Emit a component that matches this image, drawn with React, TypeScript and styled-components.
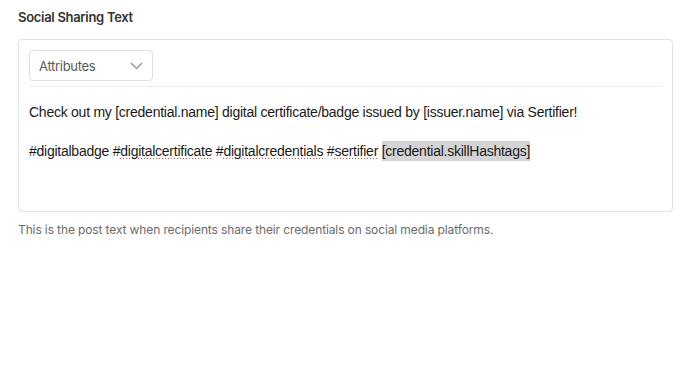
import styled, { createGlobalStyle } from 'styled-components'

const GlobalStyle = createGlobalStyle`
  body {
    margin: 0;
    background: #ffffff;
    font-family: Inter, 'Noto Sans', sans-serif;
  }
`

const Page = styled.div`
  width: 688px;
  height: 376px;
  padding: 8px 15px 0 18px;
  box-sizing: border-box;
  display: flex;
  flex-direction: column;
`

const Title = styled.div`
  font-size: 13px;
  font-weight: 600;
  letter-spacing: -0.3px;
  color: #333;
  line-height: 18px;
  margin-bottom: 13px;
`

const EditorBox = styled.div`
  border: 1px solid #e1e1e6;
  border-radius: 4px;
  height: 173px;
  box-sizing: border-box;
  padding: 10px 10px 0 10px;
  display: flex;
  flex-direction: column;
`

const Toolbar = styled.div`
  display: flex;
  padding-bottom: 5px;
  border-bottom: 1px solid #ececf0;
`

const Select = styled.div`
  width: 124px;
  height: 31px;
  box-sizing: border-box;
  border: 1px solid #dedee3;
  border-radius: 4px;
  display: flex;
  align-items: center;
  justify-content: space-between;
  padding: 0 9px 0 9px;
  font-size: 13px;
  letter-spacing: -0.3px;
  color: #5a5a5a;
`

const Content = styled.div`
  font-family: 'Liberation Sans', Arial, sans-serif;
  font-size: 14px;
  letter-spacing: -0.25px;
  color: #1a1a1a;
  padding-top: 16px;
`

const Line = styled.p`
  margin: 0 0 20px 0;
  line-height: 19px;
`

const Misspelled = styled.span`
  background-image: linear-gradient(to right, #e8453c 50%, transparent 50%);
  background-size: 3px 1px;
  background-position: 0 100%;
  background-repeat: repeat-x;
`

const Highlight = styled.span`
  background: #d4d4d4;
  padding: 2px 0;
`

const Helper = styled.div`
  margin-top: 9px;
  font-size: 12px;
  letter-spacing: -0.12px;
  color: #6b6b6b;
  line-height: 17px;
`

const Chevron = () => (
  <svg width="13" height="8" viewBox="0 0 13 8" fill="none">
    <path d="M1 1l5.5 5.5L12 1" stroke="#8a8a8a" strokeWidth="1.2" />
  </svg>
)

export default function App() {
  return (
    <>
      <GlobalStyle />
      <Page>
        <Title>Social Sharing Text</Title>
        <EditorBox>
          <Toolbar>
            <Select>
              <span>Attributes</span>
              <Chevron />
            </Select>
          </Toolbar>
          <Content>
            <Line>
              Check out my [credential.name] digital certificate/badge issued by
              [issuer.name] via Sertifier!
            </Line>
            <Line>
              #digitalbadge #<Misspelled>digitalcertificate</Misspelled> #
              <Misspelled>digitalcredentials</Misspelled> #
              <Misspelled>sertifier</Misspelled>{' '}
              <Highlight>[credential.skillHashtags]</Highlight>
            </Line>
          </Content>
        </EditorBox>
        <Helper>
          This is the post text when recipients share their credentials on social
          media platforms.
        </Helper>
      </Page>
    </>
  )
}
